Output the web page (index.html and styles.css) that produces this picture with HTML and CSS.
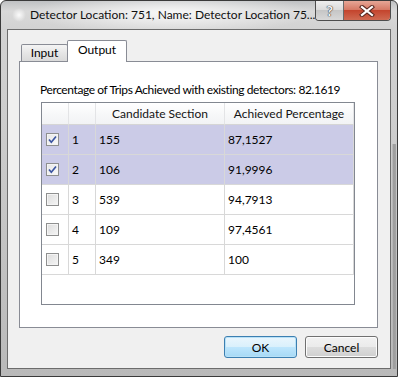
FILE: index.html
```html
<!DOCTYPE html>
<html lang="en">
<head>
    <meta charset="UTF-8">
    <title>Detector Location</title>
    <link rel="stylesheet" href="styles.css">
</head>
<body>
    <div class="window">
        <div class="titlebar">
            <span class="app-icon"></span>
            <span class="title">Detector Location: 751, Name: Detector Location 75...</span>
            <div class="caption-buttons">
                <span class="cap-btn help">?</span>
                <span class="cap-btn close">
                    <svg width="16" height="12" viewBox="0 0 16 12">
                        <path d="M3 2 L13 10 M13 2 L3 10" stroke="#5a2a22" stroke-width="4.2" stroke-linecap="square"/>
                        <path d="M3 2 L13 10 M13 2 L3 10" stroke="#ffffff" stroke-width="2.2" stroke-linecap="square"/>
                    </svg>
                </span>
            </div>
        </div>
        <div class="client">
            <div class="tabs">
                <span class="tab">Input</span>
                <span class="tab active">Output</span>
            </div>
            <div class="pane">
                <p class="summary">Percentage of Trips Achieved with existing detectors: 82.1619</p>
                <div class="grid">
                    <div class="row head">
                        <span class="cell"></span>
                        <span class="cell"></span>
                        <span class="cell">Candidate Section</span>
                        <span class="cell">Achieved Percentage</span>
                    </div>
                    <div class="row selected">
                        <span class="cell"><span class="check on"><svg width="11" height="11" viewBox="0 0 11 11"><path d="M2 5.5 L4.3 8.2 L9 2.5" fill="none" stroke="#3b54a0" stroke-width="1.7"/></svg></span></span>
                        <span class="cell">1</span>
                        <span class="cell">155</span>
                        <span class="cell">87,1527</span>
                    </div>
                    <div class="row selected">
                        <span class="cell"><span class="check on"><svg width="11" height="11" viewBox="0 0 11 11"><path d="M2 5.5 L4.3 8.2 L9 2.5" fill="none" stroke="#3b54a0" stroke-width="1.7"/></svg></span></span>
                        <span class="cell">2</span>
                        <span class="cell">106</span>
                        <span class="cell">91,9996</span>
                    </div>
                    <div class="row">
                        <span class="cell"><span class="check"></span></span>
                        <span class="cell">3</span>
                        <span class="cell">539</span>
                        <span class="cell">94,7913</span>
                    </div>
                    <div class="row">
                        <span class="cell"><span class="check"></span></span>
                        <span class="cell">4</span>
                        <span class="cell">109</span>
                        <span class="cell">97,4561</span>
                    </div>
                    <div class="row">
                        <span class="cell"><span class="check"></span></span>
                        <span class="cell">5</span>
                        <span class="cell">349</span>
                        <span class="cell">100</span>
                    </div>
                </div>
            </div>
            <div class="buttons">
                <button class="btn default">OK</button>
                <button class="btn">Cancel</button>
            </div>
        </div>
    </div>
</body>
</html>
```

FILE: styles.css
```css
body {
    margin: 0;
    font-family: "Segoe UI", Lato, sans-serif;
    font-size: 12px;
    color: #000;
}

.window {
    width: 398px;
    height: 377px;
    box-sizing: border-box;
    border: 1px solid #3a3a3a;
    border-radius: 6px 6px 0 0;
    padding: 0 6px 7px 6px;
    display: flex;
    flex-direction: column;
    background:
        linear-gradient(to right, #c4c4c4, #9c9c9c 40%, #a4a4a4) right 1px bottom 7px / 4px 225px no-repeat,
        radial-gradient(ellipse 140px 22px at 170px 12px, rgba(255, 255, 255, 0.8), rgba(255, 255, 255, 0) 100%),
        linear-gradient(to bottom, #bfc1c3 0, #d9d9d9 10px, #d2d2d2 28px, #cdcdcd 120px, #b9b9b9 100%);
}

.titlebar {
    height: 28px;
    display: flex;
    flex-shrink: 0;
}

.app-icon {
    width: 14px;
    height: 14px;
    margin: 7px 0 0 5px;
    border-radius: 50%;
    background: radial-gradient(circle, rgba(255, 255, 255, 0.9), rgba(255, 255, 255, 0) 70%);
}

.title {
    margin: 6px 0 0 4px;
    line-height: 15px;
    color: #101010;
    white-space: nowrap;
}

.caption-buttons {
    margin-left: auto;
    display: flex;
    height: 19px;
    border: 1px solid #4d4d4d;
    border-top: none;
    border-radius: 0 0 4px 4px;
    overflow: hidden;
}

.cap-btn {
    display: flex;
    align-items: center;
    justify-content: center;
    height: 19px;
}

.help {
    width: 27px;
    border-right: 1px solid #6a6a6a;
    background: linear-gradient(to bottom, #eeeeee, #dcdcdc 45%, #c6c6c6 50%, #d8d8d8);
    font-weight: bold;
    font-size: 14px;
    color: #f4f4f4;
    text-shadow: 0 0 1px #444, 0 0 1px #444, 0 0 1px #444;
}

.close {
    width: 46px;
    background: linear-gradient(to bottom, #e6a696, #d67a66 45%, #c4452e 50%, #cf6a52);
}

.client {
    flex: 1;
    border: 1px solid #6c6c6c;
    background: #f0f0f0;
    padding: 11px 12px 0 11px;
    display: flex;
    flex-direction: column;
}

.tabs {
    height: 20px;
    display: flex;
    align-items: flex-end;
    padding-left: 2px;
}

.tab {
    height: 16px;
    width: 45px;
    border: 1px solid #898c95;
    border-bottom: none;
    border-radius: 2px 2px 0 0;
    background: linear-gradient(to bottom, #f4f4f4, #e6e6e6 50%, #dadada);
    text-align: center;
    line-height: 15px;
}

.tab.active {
    position: relative;
    z-index: 1;
    width: 58px;
    height: 21px;
    margin-left: -1px;
    margin-bottom: -1px;
    background: #fff;
    line-height: 17px;
}

.pane {
    height: 267px;
    box-sizing: border-box;
    border: 1px solid #898c95;
    background: #fff;
    padding: 20px 0 0 20px;
}

.summary {
    margin: 0 0 5px;
    line-height: 15px;
    letter-spacing: -0.4px;
}

.grid {
    width: 314px;
    height: 203px;
    box-sizing: border-box;
    margin-left: 1px;
    border: 1px solid #828790;
    background: #fff;
}

.row {
    display: grid;
    grid-template-columns: 27px 27px 129px 129px;
    height: 30px;
}

.cell {
    box-sizing: border-box;
    border-right: 1px solid #d8d8d8;
    border-bottom: 1px solid #d8d8d8;
    display: flex;
    align-items: center;
    padding-left: 3px;
    white-space: nowrap;
}

.row.head {
    height: 22px;
    background: linear-gradient(to bottom, #ffffff, #f7f8f9 50%, #f1f2f4);
}

.row.head .cell {
    justify-content: center;
    padding-left: 0;
    border-right-color: #e3e4e6;
    border-bottom-color: #d5d5d5;
    color: #141414;
}

.row.selected {
    background: #cbcbe7;
}

.check {
    width: 13px;
    height: 13px;
    box-sizing: border-box;
    margin-left: 1px;
    border: 1px solid #8e8f8f;
    background: linear-gradient(135deg, #dcdcdc, #f6f6f6);
    box-shadow: inset 0 0 0 1px #f4f4f4;
    display: flex;
    align-items: center;
    justify-content: center;
}

.check.on {
    background: linear-gradient(135deg, #e6e6e6, #fafafa);
}

.buttons {
    display: flex;
    justify-content: flex-end;
    gap: 8px;
    margin-top: 8px;
}

.btn {
    width: 73px;
    height: 22px;
    box-sizing: border-box;
    border: 1px solid #707070;
    border-radius: 3px;
    font: inherit;
    color: #000;
    padding: 0;
    background: linear-gradient(to bottom, #f2f2f2, #ebebeb 50%, #dddddd 50%, #cfcfcf);
    box-shadow: inset 0 0 0 1px #fcfcfc;
}

.btn.default {
    border-color: #3c7fb1;
    background: linear-gradient(to bottom, #eaf6fd, #d9f0fc 50%, #bee6fd 50%, #a7d9f5);
    box-shadow: inset 0 0 0 1px #b8e1f7;
}
```
